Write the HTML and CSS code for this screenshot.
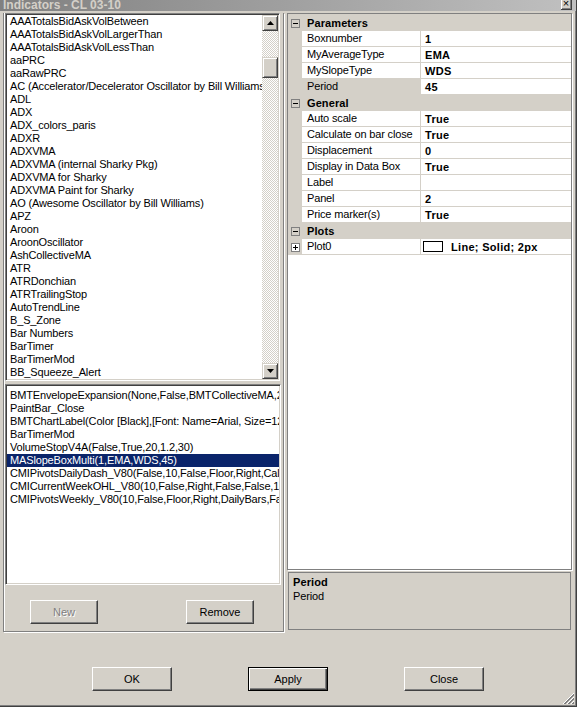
FILE: index.html
```html
<!DOCTYPE html>
<html lang="en">
<head>
    <meta charset="UTF-8">
    <title>Indicators - CL 03-10</title>
    <link rel="stylesheet" href="styles.css">
</head>
<body>
<div class="window">

    <!-- Title bar -->
    <div class="titlebar">
        <span class="title">Indicators - CL 03-10</span>
        <span class="close-btn">&times;</span>
    </div>

    <div class="main">

        <!-- Left side: available + applied indicators -->
        <div class="left-pane">
            <div class="listbox indicator-list">
                <ul class="items">
                    <li>AAATotalsBidAskVolBetween</li>
                    <li>AAATotalsBidAskVolLargerThan</li>
                    <li>AAATotalsBidAskVolLessThan</li>
                    <li>aaPRC</li>
                    <li>aaRawPRC</li>
                    <li>AC (Accelerator/Decelerator Oscillator by Bill Williams)</li>
                    <li>ADL</li>
                    <li>ADX</li>
                    <li>ADX_colors_paris</li>
                    <li>ADXR</li>
                    <li>ADXVMA</li>
                    <li>ADXVMA (internal Sharky Pkg)</li>
                    <li>ADXVMA for Sharky</li>
                    <li>ADXVMA Paint for Sharky</li>
                    <li>AO (Awesome Oscillator by Bill Williams)</li>
                    <li>APZ</li>
                    <li>Aroon</li>
                    <li>AroonOscillator</li>
                    <li>AshCollectiveMA</li>
                    <li>ATR</li>
                    <li>ATRDonchian</li>
                    <li>ATRTrailingStop</li>
                    <li>AutoTrendLine</li>
                    <li>B_S_Zone</li>
                    <li>Bar Numbers</li>
                    <li>BarTimer</li>
                    <li>BarTimerMod</li>
                    <li>BB_Squeeze_Alert</li>
                </ul>
                <div class="vscroll">
                    <div class="sb-btn">
                        <svg width="7" height="4" viewBox="0 0 7 4"><path d="M3.5 0L7 4H0z" fill="#000"/></svg>
                    </div>
                    <div class="sb-track"><div class="sb-thumb"></div></div>
                    <div class="sb-btn">
                        <svg width="7" height="4" viewBox="0 0 7 4"><path d="M0 0H7L3.5 4z" fill="#000"/></svg>
                    </div>
                </div>
            </div>

            <div class="listbox applied-list">
                <ul class="items">
                    <li>BMTEnvelopeExpansion(None,False,BMTCollectiveMA,20,1,True)</li>
                    <li>PaintBar_Close</li>
                    <li>BMTChartLabel(Color [Black],[Font: Name=Arial, Size=12, Units=Point])</li>
                    <li>BarTimerMod</li>
                    <li>VolumeStopV4A(False,True,20,1.2,30)</li>
                    <li class="selected">MASlopeBoxMulti(1,EMA,WDS,45)</li>
                    <li>CMIPivotsDailyDash_V80(False,10,False,Floor,Right,Calculated)</li>
                    <li>CMICurrentWeekOHL_V80(10,False,Right,False,False,15)</li>
                    <li>CMIPivotsWeekly_V80(10,False,Floor,Right,DailyBars,False)</li>
                </ul>
            </div>

            <div class="pane-buttons">
                <button class="btn" disabled>New</button>
                <button class="btn">Remove</button>
            </div>
        </div>

        <!-- Right side: property grid -->
        <div class="right-pane">
            <div class="grid">
                <div class="row cat-row">
                    <span class="gutter"><span class="expander minus"></span></span>
                    <span class="cat-label">Parameters</span>
                </div>
                <div class="row">
                    <span class="gutter"></span>
                    <span class="name">Boxnumber</span>
                    <span class="value">1</span>
                </div>
                <div class="row">
                    <span class="gutter"></span>
                    <span class="name">MyAverageType</span>
                    <span class="value">EMA</span>
                </div>
                <div class="row">
                    <span class="gutter"></span>
                    <span class="name">MySlopeType</span>
                    <span class="value">WDS</span>
                </div>
                <div class="row">
                    <span class="gutter"></span>
                    <span class="name active">Period</span>
                    <span class="value">45</span>
                </div>

                <div class="row cat-row">
                    <span class="gutter"><span class="expander minus"></span></span>
                    <span class="cat-label">General</span>
                </div>
                <div class="row">
                    <span class="gutter"></span>
                    <span class="name">Auto scale</span>
                    <span class="value">True</span>
                </div>
                <div class="row">
                    <span class="gutter"></span>
                    <span class="name">Calculate on bar close</span>
                    <span class="value">True</span>
                </div>
                <div class="row">
                    <span class="gutter"></span>
                    <span class="name">Displacement</span>
                    <span class="value">0</span>
                </div>
                <div class="row">
                    <span class="gutter"></span>
                    <span class="name">Display in Data Box</span>
                    <span class="value">True</span>
                </div>
                <div class="row">
                    <span class="gutter"></span>
                    <span class="name">Label</span>
                    <span class="value"></span>
                </div>
                <div class="row">
                    <span class="gutter"></span>
                    <span class="name">Panel</span>
                    <span class="value">2</span>
                </div>
                <div class="row">
                    <span class="gutter"></span>
                    <span class="name">Price marker(s)</span>
                    <span class="value">True</span>
                </div>

                <div class="row cat-row">
                    <span class="gutter"><span class="expander minus"></span></span>
                    <span class="cat-label">Plots</span>
                </div>
                <div class="row">
                    <span class="gutter"><span class="expander plus"></span></span>
                    <span class="name">Plot0</span>
                    <span class="value"><span class="swatch"></span>Line; Solid; 2px</span>
                </div>
            </div>

            <div class="desc">
                <div class="desc-title">Period</div>
                <div>Period</div>
            </div>
        </div>
    </div>

    <!-- Dialog buttons -->
    <div class="footer">
        <button class="btn wide">OK</button>
        <button class="btn wide default">Apply</button>
        <button class="btn wide">Close</button>
        <svg class="grip" width="13" height="13" viewBox="0 0 13 13">
            <path d="M12 1L1 12M12 5L5 12M12 9L9 12" stroke="#fff"/>
            <path d="M12 2L2 12M12 3L3 12M12 6L6 12M12 7L7 12M12 10L10 12M12 11L11 12" stroke="#808080"/>
        </svg>
    </div>
</div>
</body>
</html>
```

FILE: styles.css
```css
/* Reset default styles */
* {
    margin: 0;
    padding: 0;
    box-sizing: border-box;
}

body {
    font-family: "Liberation Sans", Arial, sans-serif;
    font-size: 11px;
    letter-spacing: -0.15px;
    color: #000;
    background-color: #d4d0c8;
}

.window {
    width: 577px;
    height: 707px;
    display: flex;
    flex-direction: column;
    background-color: #d4d0c8;
    border-right: 1px solid #404040;
    border-bottom: 1px solid #404040;
    box-shadow: inset -1px -1px #808080;
    overflow: hidden;
}

/* Title bar */
.titlebar {
    height: 11px;
    flex-shrink: 0;
    display: flex;
    align-items: flex-start;
    padding: 0 4px 0 3px;
    background: linear-gradient(90deg, #808080, #c0c0c0);
}

.title {
    flex: 1;
    font-size: 12px;
    font-weight: bold;
    line-height: 11px;
    letter-spacing: 0;
    color: #d4d0c8;
}

.close-btn {
    width: 11px;
    height: 10px;
    font-size: 11px;
    line-height: 7px;
    text-align: center;
    letter-spacing: 0;
    background-color: #d4d0c8;
    border-right: 1px solid #404040;
    border-bottom: 1px solid #404040;
    box-shadow: inset 1px 0 #fff, inset -1px -1px #808080;
}

.main {
    display: flex;
    height: 622px;
    flex-shrink: 0;
    padding: 2px 0 0 3px;
}

/* Left pane */
.left-pane {
    width: 281px;
    height: 619px;
    display: flex;
    flex-direction: column;
    padding-left: 1px;
    border-left: 1px solid #808080;
    border-right: 1px solid #808080;
    border-bottom: 1px solid #808080;
    box-shadow: inset 1px 0 #fff, 1px 1px 0 #fff;
}

.listbox {
    background-color: #fff;
    border: 1px solid;
    border-color: #808080 #fff #fff #808080;
    box-shadow: inset 1px 1px #404040, inset -1px -1px #d4d0c8;
    padding: 1px;
}

.indicator-list {
    width: 275px;
    height: 368px;
    display: flex;
}

.applied-list {
    width: 276px;
    height: 201px;
    margin-top: 3px;
    padding-top: 4px;
}

.items {
    list-style: none;
    flex: 1;
    min-width: 0;
    overflow: hidden;
}

.items li {
    height: 13px;
    line-height: 13px;
    padding-left: 3px;
    white-space: nowrap;
    overflow: hidden;
}

.items li.selected {
    background-color: #0a246a;
    color: #fff;
}

/* Scroll bar */
.vscroll {
    width: 16px;
    display: flex;
    flex-direction: column;
}

.sb-btn,
.sb-thumb {
    height: 16px;
    background-color: #d4d0c8;
    border: 1px solid;
    border-color: #d4d0c8 #404040 #404040 #d4d0c8;
    box-shadow: inset 1px 1px #fff, inset -1px -1px #808080;
}

.sb-btn {
    display: flex;
    align-items: center;
    justify-content: center;
}

.sb-track {
    flex: 1;
    padding-top: 26px;
    background: repeating-conic-gradient(#d4d0c8 0 25%, #fff 0 50%) 0 0 / 2px 2px;
}

.sb-thumb {
    height: 21px;
}

/* Buttons */
.btn {
    width: 68px;
    height: 24px;
    font: inherit;
    color: #000;
    background-color: #d4d0c8;
    border: 1px solid;
    border-color: #fff #404040 #404040 #fff;
    box-shadow: inset -1px -1px #808080;
}

.btn:disabled {
    color: #808080;
    text-shadow: 1px 1px #fff;
}

.btn.wide {
    width: 80px;
}

.btn.default {
    border-color: #000;
    box-shadow: inset 1px 1px #fff, inset -1px -1px #404040, inset -2px -2px #808080;
}

.pane-buttons {
    display: flex;
    gap: 88px;
    padding: 15px 0 0 25px;
}

/* Right pane / property grid */
.right-pane {
    margin-left: 3px;
    display: flex;
    flex-direction: column;
}

.grid {
    width: 285px;
    height: 557px;
    padding-top: 1px;
    background-color: #fff;
    border: 1px solid #808080;
    box-shadow: inset 0 1px #d4d0c8, 1px 1px 0 #fff;
}

.row {
    display: flex;
    height: 16px;
}

.gutter {
    width: 14px;
    flex-shrink: 0;
    display: flex;
    align-items: center;
    padding-left: 3px;
    background-color: #d4d0c8;
}

.name {
    width: 119px;
    padding-left: 5px;
    line-height: 15px;
    white-space: nowrap;
    overflow: hidden;
    border-right: 1px solid #d4d0c8;
    border-bottom: 1px solid #d4d0c8;
}

.name.active {
    background-color: #d4d0c8;
}

.value {
    flex: 1;
    display: flex;
    align-items: center;
    padding-left: 4px;
    font-weight: bold;
    letter-spacing: 0.3px;
    border-bottom: 1px solid #d4d0c8;
}

.cat-row {
    background-color: #d4d0c8;
}

.cat-label {
    padding-left: 5px;
    line-height: 16px;
    font-weight: bold;
    letter-spacing: 0.1px;
}

.expander {
    width: 9px;
    height: 9px;
    border: 1px solid #808080;
    position: relative;
}

.expander::before {
    content: "";
    position: absolute;
    left: 1px;
    top: 3px;
    width: 5px;
    height: 1px;
    background-color: #000;
}

.expander.plus {
    background-color: #fff;
}

.expander.plus::after {
    content: "";
    position: absolute;
    left: 3px;
    top: 1px;
    width: 1px;
    height: 5px;
    background-color: #000;
}

.swatch {
    width: 20px;
    height: 11px;
    margin: 0 8px 0 -2px;
    border: 1px solid #000;
    background-color: #fff;
}

.desc {
    width: 283px;
    height: 58px;
    margin: 2px 0 0 1px;
    padding: 2px 4px;
    line-height: 14px;
    border: 1px solid #808080;
}

.desc-title {
    font-weight: bold;
    letter-spacing: 0.1px;
}

/* Footer */
.footer {
    flex: 1;
    display: flex;
    align-items: flex-start;
    gap: 76px;
    padding: 34px 0 0 92px;
}

.grip {
    margin-left: auto;
    align-self: flex-end;
    margin-bottom: 1px;
    margin-right: 1px;
}
```
